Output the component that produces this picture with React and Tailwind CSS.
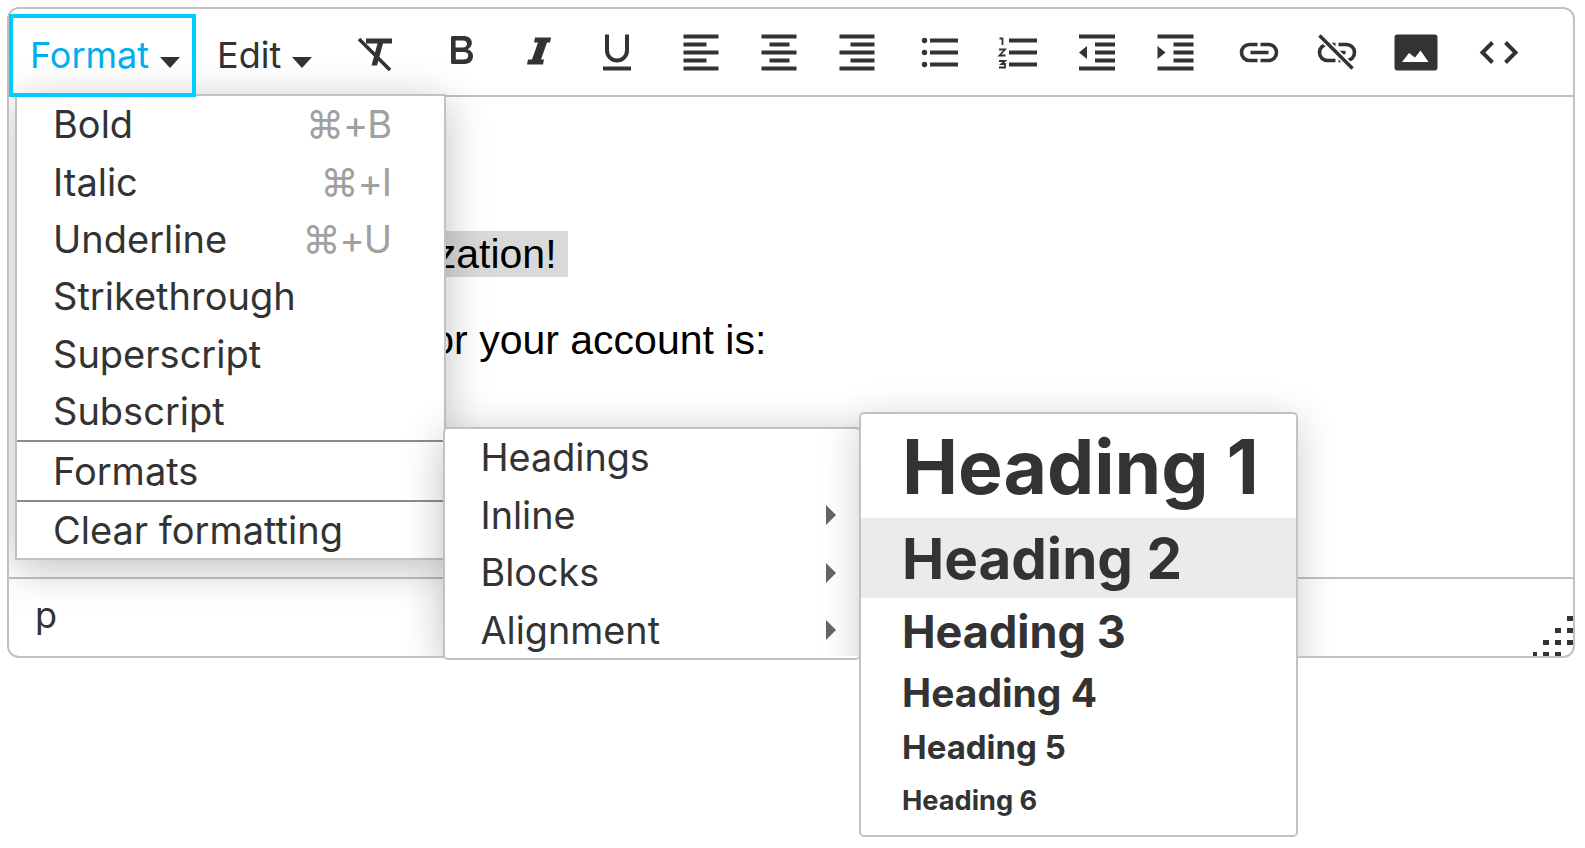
import React from "react";

const Ico = ({ cx, children }) => (
  <div className="w-[78px] h-full flex items-center justify-center shrink-0">
    <svg viewBox={`${cx - 25} 27.5 50 50`} className="w-[50px] h-[50px] text-[#333333]" fill="currentColor">
      {children}
    </svg>
  </div>
);

const Bars = ({ x, w, shortW, shortOff }) => (
  <>
    <rect x={x} y="35" width={w} height="4" />
    <rect x={x + shortOff} y="43" width={shortW} height="4" />
    <rect x={x} y="51" width={w} height="4" />
    <rect x={x + shortOff} y="59" width={shortW} height="4" />
    <rect x={x} y="67" width={w} height="4" />
  </>
);

const Caret = ({ className }) => (
  <svg viewBox="0 0 20 11" className={`w-[20px] h-[11px] mt-[15px] shrink-0 ${className}`}>
    <path d="M0 0H20L10 11Z" fill="#333333" />
  </svg>
);

const Toolbar = () => (
  <div className="h-[88px] flex border-b-2 border-[#c2c2c2] shrink-0">
    <div className="relative z-50 w-[187px] h-[83px] mt-[5px] pb-[1px] border-[4px] border-[#00ccff] flex items-center pl-[17px] text-[#00aeef] shrink-0">
      <span>Format</span>
      <Caret className="ml-auto mr-[12px]" />
    </div>
    <div className="w-[140px] h-[83px] mt-[5px] pb-[1px] flex items-center pl-[21px] shrink-0">
      <span>Edit</span>
      <Caret className="ml-auto mr-[24px]" />
    </div>
    <Ico cx={375}>
      <path d="M359 39.500L390 70.500" stroke="currentColor" strokeWidth="3.6" fill="none" />
      <path d="M366 39H392V44H383L377 66H371.500L377.500 44H366Z" />
    </Ico>
    <div className="ml-[8px] h-full flex">
      <Ico cx={461}>
        <path transform="translate(437 26.5) scale(2 2)" d="M7.8 19c-.3 0-.5 0-.6-.2l-.2-.5V5.7c0-.2 0-.4.2-.5l.6-.2h5c1.5 0 2.7.3 3.5 1 .7.6 1.1 1.4 1.1 2.5a3 3 0 0 1-.6 1.9c-.4.6-1 1-1.6 1.2.4.1.9.3 1.3.6s.8.7 1 1.2c.4.4.5 1 .5 1.6 0 1.3-.4 2.3-1.3 3-.8.7-2.1 1-3.8 1H7.8zm5-8.3c.6 0 1.2-.1 1.6-.5.4-.3.6-.7.6-1.3 0-1.1-.8-1.7-2.3-1.7H9.3v3.5h3.4zm.5 6c.7 0 1.3-.1 1.7-.4.4-.4.6-.9.6-1.500s-.2-1-.7-1.4c-.4-.3-1-.4-2-.4H9.4v3.8h4z" />
      </Ico>
      <Ico cx={539}>
        <path d="M535 38H551L550 43H547L541 60H544L543 65H527L528 60H532L538 43H534Z" />
      </Ico>
      <Ico cx={617}>
        <path d="M607 35V51a10 10 0 0 0 20 0V35" fill="none" stroke="currentColor" strokeWidth="4" />
        <rect x="603" y="67" width="28" height="4" />
      </Ico>
    </div>
    <div className="ml-[5.5px] h-full flex">
      <Ico cx={700.5}><Bars x={683} w={35} shortW={23} shortOff={0} /></Ico>
      <Ico cx={778.5}><Bars x={761} w={35} shortW={20} shortOff={8} /></Ico>
      <Ico cx={856.5}><Bars x={839} w={35} shortW={24} shortOff={11} /></Ico>
    </div>
    <div className="ml-[5.5px] h-full flex">
      <Ico cx={940}>
        <circle cx="924.5" cy="41" r="2.7" />
        <circle cx="924.5" cy="53" r="2.7" />
        <circle cx="924.5" cy="65" r="2.7" />
        <rect x="930" y="39" width="28" height="4" />
        <rect x="930" y="51" width="28" height="4" />
        <rect x="930" y="63" width="28" height="4" />
      </Ico>
      <Ico cx={1018}>
        <path d="M999.5 39H1002.5V45.5" fill="none" stroke="currentColor" strokeWidth="1.8" />
        <path d="M999 50H1005L999.5 56H1005.5" fill="none" stroke="currentColor" strokeWidth="1.8" />
        <path d="M999 61.5H1005L1001.5 64.5H1005V68H999" fill="none" stroke="currentColor" strokeWidth="1.8" />
        <rect x="1009" y="39" width="28" height="4" />
        <rect x="1009" y="51" width="28" height="4" />
        <rect x="1009" y="63" width="28" height="4" />
      </Ico>
    </div>
    <div className="ml-[1px] h-full flex">
      <Ico cx={1097}>
        <rect x="1079" y="35" width="36" height="4" />
        <rect x="1095" y="43" width="20" height="4" />
        <rect x="1095" y="51" width="20" height="4" />
        <rect x="1095" y="59" width="20" height="4" />
        <rect x="1079" y="67" width="36" height="4" />
        <path d="M1087 46.500V59.500L1079 53Z" />
      </Ico>
      <Ico cx={1175}>
        <rect x="1157.500" y="35" width="36" height="4" />
        <rect x="1173.500" y="43" width="20" height="4" />
        <rect x="1173.500" y="51" width="20" height="4" />
        <rect x="1173.500" y="59" width="20" height="4" />
        <rect x="1157.500" y="67" width="36" height="4" />
        <path d="M1157.500 46.500V59.500L1165.500 53Z" />
      </Ico>
    </div>
    <div className="ml-[5.5px] h-full flex">
      <Ico cx={1258.5}>
        <path d="M1257 45H1249a8 8 0 0 0 0 16H1257M1260 45H1268a8 8 0 0 1 0 16H1260M1250 53H1268" fill="none" stroke="currentColor" strokeWidth="3.600" />
      </Ico>
      <Ico cx={1336.5}>
        <path d="M1335 45H1327a8 8 0 0 0 0 16H1335M1338 45H1346a8 8 0 0 1 0 16H1338M1336 53H1345" fill="none" stroke="currentColor" strokeWidth="3.600" />
        <path d="M1319 36L1352 69" fill="none" stroke="#ffffff" strokeWidth="7" />
        <path d="M1319 36L1352 69" fill="none" stroke="currentColor" strokeWidth="3.600" />
      </Ico>
      <div className="ml-[1px] h-full flex">
        <Ico cx={1415.5}>
          <path fillRule="evenodd" d="M1397 35H1434a3 3 0 0 1 3 3V68a3 3 0 0 1-3 3H1397a3 3 0 0 1-3-3V38a3 3 0 0 1 3-3ZM1401.500 62.500H1428L1420 51L1414.500 58L1408.500 53.500Z" />
        </Ico>
      </div>
    </div>
    <div className="ml-[5px] h-full flex">
      <Ico cx={1498.5}>
        <path d="M1492 43L1482 53L1492 63M1505 43L1515 53L1505 63" fill="none" stroke="currentColor" strokeWidth="4" />
      </Ico>
    </div>
  </div>
);

const Content = () => (
  <div className="flex-1 min-h-0 font-['Liberation_Sans',Arial,sans-serif] text-black text-[41px] leading-[46px] pt-[134px] pl-[15px] whitespace-nowrap">
    <p className="mb-[40px]">
      <span className="bg-[#d9d9d9] inline-block pr-[11px]">Welcome to our organization!</span>
    </p>
    <p className="ml-[10px]">Your initial password for your account is:</p>
  </div>
);

const StatusBar = () => (
  <div className="relative h-[79px] border-t-2 border-[#c2c2c2] pl-[26px] pt-[13px] text-[36px] leading-[46px] text-[#333333] shrink-0">
    p
    <svg viewBox="0 0 40 40" className="absolute right-0 bottom-0 w-[40px] h-[40px]" fill="#333333">
      <rect x="34" y="0" width="6" height="5" />
      <rect x="22" y="12" width="6" height="5" />
      <rect x="34" y="12" width="6" height="5" />
      <rect x="10" y="24" width="6" height="5" />
      <rect x="22" y="24" width="6" height="5" />
      <rect x="34" y="24" width="6" height="5" />
      <rect x="-2" y="36" width="6" height="4" />
      <rect x="10" y="36" width="6" height="4" />
      <rect x="22" y="36" width="6" height="4" />
    </svg>
  </div>
);

const Row = ({ label, short }) => (
  <div className="h-[57.4px] pl-[36px] pr-[53px] flex items-center justify-between text-[#333333]">
    <span>{label}</span>
    {short && <span className="text-[#a0a0a0] tracking-[-1px]">{short}</span>}
  </div>
);

const Divider = () => <div className="h-[2px] bg-[#8c8c8c]" />;

const ShadowClip = ({ children, className }) => (
  <div className={`absolute left-[9px] top-[9px] w-[1564px] h-[647px] rounded-[10px] overflow-hidden ${className}`}>
    {children}
  </div>
);

const MainMenu = () => (
  <>
    <ShadowClip className="z-10">
      <div className="absolute left-[6px] top-[85px] w-[431px] h-[466px] shadow-[0_8px_40px_rgba(0,0,0,0.25)]" />
    </ShadowClip>
    <div className="absolute left-[15px] top-[94px] w-[431px] h-[466px] bg-white border-2 border-[#c2c2c2] z-20 text-[38px]">
      <Row label="Bold" short="⌘+B" />
      <Row label="Italic" short="⌘+I" />
      <Row label="Underline" short="⌘+U" />
      <Row label="Strikethrough" />
      <Row label="Superscript" />
      <Row label="Subscript" />
      <Divider />
      <Row label="Formats" />
      <Divider />
      <Row label="Clear formatting" />
    </div>
  </>
);

const Arrow = () => (
  <svg viewBox="0 0 10 20" className="w-[10px] h-[20px] text-[#666666]" fill="currentColor">
    <path d="M0 0L10 10L0 20Z" />
  </svg>
);

const SubRow = ({ label, arrow }) => (
  <div className="h-[57.500px] pl-[35.5px] pr-[23px] flex items-center justify-between text-[#333333]">
    <span>{label}</span>
    {arrow && <Arrow />}
  </div>
);

const FormatsMenu = () => (
  <>
    <ShadowClip className="z-[21]">
      <div className="absolute left-[434px] top-[418px] w-[418px] h-[233px] rounded-[5px] shadow-[0_8px_40px_rgba(0,0,0,0.25)]" />
    </ShadowClip>
    <div className="absolute left-[443px] top-[427px] w-[418px] h-[233px] bg-white border-2 border-[#c2c2c2] rounded-[5px] z-30 text-[37.75px]">
      <SubRow label="Headings" />
      <SubRow label="Inline" arrow />
      <SubRow label="Blocks" arrow />
      <SubRow label="Alignment" arrow />
    </div>
  </>
);

const HeadingsMenu = () => (
  <>
    <ShadowClip className="z-[31]">
      <div className="absolute left-[850px] top-[403px] w-[439px] h-[425px] rounded-[5px] shadow-[0_8px_40px_rgba(0,0,0,0.2)]" />
    </ShadowClip>
    <div className="absolute left-[859px] top-[412px] w-[439px] h-[425px] bg-white border-2 border-[#c2c2c2] rounded-[5px] z-40 font-bold text-[#333333]">
      <div className="h-[104px] pt-[1px] pl-[41px] flex items-center text-[75px] leading-none">Heading 1</div>
      <div className="h-[80px] pt-[3px] pl-[41px] flex items-center text-[56.500px] leading-none bg-[#ebebeb]">Heading 2</div>
      <div className="h-[68px] pb-[2px] pl-[41px] flex items-center text-[45px] leading-none">Heading 3</div>
      <div className="h-[53px] pl-[41px] flex items-center text-[39px] leading-none">Heading 4</div>
      <div className="h-[56px] pl-[41px] flex items-center text-[33px] leading-none">Heading 5</div>
      <div className="h-[50px] pt-[1px] pl-[41px] flex items-center text-[27.200px] leading-none">Heading 6</div>
    </div>
  </>
);

export default function App() {
  return (
    <div className="relative w-[1585px] h-[848px] bg-white overflow-hidden font-['Inter',sans-serif] text-[36px] text-[#333333] pt-[7px] pl-[7px]">
      <div className="w-[1568px] h-[651px] border-2 border-[#c2c2c2] rounded-[12px] flex flex-col bg-white">
        <Toolbar />
        <Content />
        <StatusBar />
      </div>
      <MainMenu />
      <FormatsMenu />
      <HeadingsMenu />
    </div>
  );
}
